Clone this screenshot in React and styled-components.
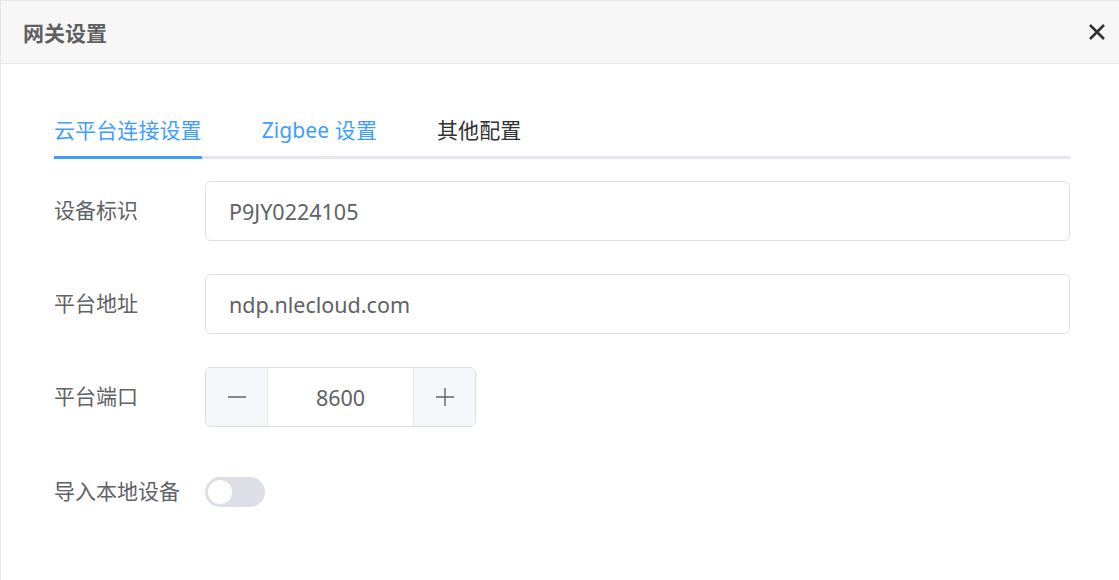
import React from 'react';
import styled, { createGlobalStyle } from 'styled-components';

const GlobalStyle = createGlobalStyle`
  html, body {
    margin: 0;
    padding: 0;
    background: #fff;
  }
  body {
    font-family: "Noto Sans", "Noto Sans CJK SC", sans-serif;
  }
`;

const Dialog = styled.div`
  width: 1119px;
  height: 580px;
  box-sizing: border-box;
  border-left: 1px solid #e6e6e6;
  border-top: 1px solid #e6e6e6;
  background: #fff;
`;

const Header = styled.div`
  height: 62px;
  background: #f7f7f7;
  border-bottom: 1px solid #e8e8e8;
  display: flex;
  align-items: center;
  justify-content: space-between;
  padding: 0 12px 0 22px;
`;

const Title = styled.div`
  font-size: 21px;
  font-weight: 700;
  color: #606060;
  font-family: "Noto Sans CJK SC", sans-serif;
`;

const CloseButton = styled.button`
  border: none;
  background: none;
  padding: 0;
  width: 20px;
  height: 20px;
  display: flex;
  align-items: center;
  justify-content: center;
  cursor: pointer;
`;

const Body = styled.div`
  padding: 41px 49px 0 53px;
`;

const TabBar = styled.div`
  display: flex;
  border-bottom: 3px solid #e4e7ed;
  margin-bottom: 22px;
`;

const Tab = styled.div`
  height: 51px;
  line-height: 51px;
  font-size: 21px;
  letter-spacing: 0.1px;
  padding: 0 30px;
  position: relative;
  color: ${p => (p.$blue ? '#409eff' : '#303133')};
  font-family: "Noto Sans", "Noto Sans CJK SC", sans-serif;
  &:first-child {
    padding-left: 0;
  }
  &::after {
    content: '';
    display: ${p => (p.$active ? 'block' : 'none')};
    position: absolute;
    left: 0;
    right: 30px;
    bottom: -3px;
    height: 3px;
    background: #409eff;
  }
`;

const Row = styled.div`
  display: flex;
  align-items: center;
  height: ${p => p.$height || 60}px;
  margin-bottom: 33px;
`;

const Label = styled.div`
  width: 151px;
  flex-shrink: 0;
  font-size: 21px;
  padding-bottom: 4px;
  color: #606266;
  font-family: "Noto Sans CJK SC", sans-serif;
`;

const Input = styled.div`
  flex: 1;
  height: 60px;
  box-sizing: border-box;
  border: 1px solid #dcdfe6;
  border-radius: 6px;
  display: flex;
  align-items: center;
  padding: 0 23px;
  font-size: 21.5px;
  color: #606266;
`;

const NumberBox = styled.div`
  width: 271px;
  height: 60px;
  box-sizing: border-box;
  border: 1px solid #dcdfe6;
  border-radius: 6px;
  display: flex;
  overflow: hidden;
`;

const StepButton = styled.div`
  width: 61px;
  background: #f5f7fa;
  display: flex;
  align-items: center;
  justify-content: center;
  border-${p => (p.$side === 'left' ? 'right' : 'left')}: 1px solid #e4e7ed;
`;

const NumberValue = styled.div`
  flex: 1;
  display: flex;
  align-items: center;
  justify-content: center;
  font-size: 21.5px;
  color: #606266;
`;

const Switch = styled.div`
  width: 60px;
  height: 30px;
  border-radius: 15px;
  background: #dcdfe6;
  position: relative;
  &::after {
    content: '';
    position: absolute;
    left: 3px;
    top: 3px;
    width: 24px;
    height: 24px;
    border-radius: 50%;
    background: #fff;
  }
`;

export default function App() {
  return (
    <>
      <GlobalStyle />
      <Dialog>
        <Header>
          <Title>网关设置</Title>
          <CloseButton>
            <svg width="18" height="18" viewBox="0 0 18 18">
              <path d="M2 2 L16 16 M16 2 L2 16" stroke="#303133" strokeWidth="2.6" strokeLinecap="butt" />
            </svg>
          </CloseButton>
        </Header>
        <Body>
          <TabBar>
            <Tab $active $blue>云平台连接设置</Tab>
            <Tab $blue>Zigbee 设置</Tab>
            <Tab>其他配置</Tab>
          </TabBar>
          <Row>
            <Label>设备标识</Label>
            <Input>P9JY0224105</Input>
          </Row>
          <Row>
            <Label>平台地址</Label>
            <Input>ndp.nlecloud.com</Input>
          </Row>
          <Row>
            <Label>平台端口</Label>
            <NumberBox>
              <StepButton $side="left">
                <svg width="18" height="18" viewBox="0 0 18 18">
                  <path d="M0 9 H18" stroke="#606266" strokeWidth="1.4" />
                </svg>
              </StepButton>
              <NumberValue>8600</NumberValue>
              <StepButton $side="right">
                <svg width="18" height="18" viewBox="0 0 18 18">
                  <path d="M0 9 H18 M9 0 V18" stroke="#606266" strokeWidth="1.4" />
                </svg>
              </StepButton>
            </NumberBox>
          </Row>
          <Row $height={64}>
            <Label>导入本地设备</Label>
            <Switch />
          </Row>
        </Body>
      </Dialog>
    </>
  );
}
